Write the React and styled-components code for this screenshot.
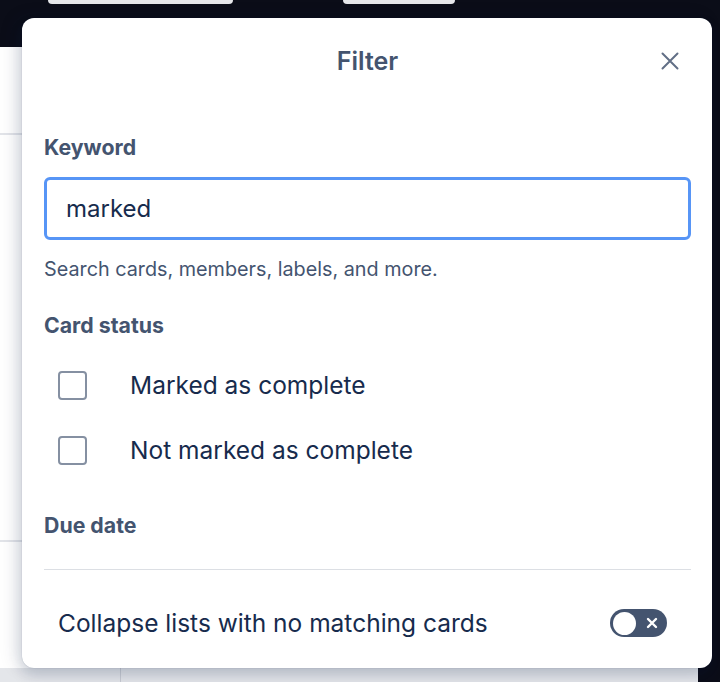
import styled, { createGlobalStyle } from "styled-components";

const GlobalStyle = createGlobalStyle`
  html, body {
    margin: 0;
    padding: 0;
    background: #0b0d18;
    font-family: Inter, "Noto Sans", "Liberation Sans", sans-serif;
  }
`;

function Checkbox() {
  return <Box type="button" aria-label="checkbox" />;
}

function Toggle() {
  return (
    <Switch type="button">
      <Knob />
      <svg width="12" height="12" viewBox="0 0 12 12">
        <path
          d="M2 2 L10 10 M10 2 L2 10"
          stroke="#fff"
          strokeWidth="2.4"
          strokeLinecap="round"
        />
      </svg>
    </Switch>
  );
}

function App() {
  return (
    <>
      <GlobalStyle />
      <Page>
        <TopBar>
          <Tab $width={185} />
          <Tab $width={112} />
        </TopBar>
        <Board>
          <Sheet>
            <SheetLine $top={86} />
            <SheetLine $top={493} />
            <SheetFooter />
          </Sheet>
        </Board>

        <Popover>
          <Header>
            <Title>Filter</Title>
            <Close type="button" aria-label="Close">
              <svg width="18" height="18" viewBox="0 0 18 18">
                <path
                  d="M1.5 1.5 L16.5 16.5 M16.5 1.5 L1.5 16.5"
                  stroke="#626f86"
                  strokeWidth="2"
                  strokeLinecap="round"
                />
              </svg>
            </Close>
          </Header>

          <Label>Keyword</Label>
          <Input defaultValue="marked" />
          <Hint>Search cards, members, labels, and more.</Hint>

          <Label $top={32}>Card status</Label>
          <Options>
            <Option>
              <Checkbox />
              <OptionText>Marked as complete</OptionText>
            </Option>
            <Option>
              <Checkbox />
              <OptionText>Not marked as complete</OptionText>
            </Option>
          </Options>

          <Label $top={37}>Due date</Label>
          <Divider />

          <CollapseRow>
            <OptionText>Collapse lists with no matching cards</OptionText>
            <Toggle />
          </CollapseRow>
        </Popover>
      </Page>
    </>
  );
}

const Page = styled.div`
  position: relative;
  width: 720px;
  height: 682px;
  overflow: hidden;
  background: #0b0d18;
  display: flex;
  flex-direction: column;
`;

const TopBar = styled.div`
  height: 47px;
  display: flex;
  align-items: flex-start;
  gap: 110px;
  padding-left: 48px;
  background: #0b0d18;
`;

const Tab = styled.div`
  width: ${(p) => p.$width}px;
  height: 4px;
  background: #e6e7ea;
  border-radius: 0 0 4px 4px;
`;

const Board = styled.div`
  flex: 1;
  display: flex;
`;

const Sheet = styled.div`
  position: relative;
  width: 698px;
  background: #ffffff;
  display: flex;
  flex-direction: column;
  justify-content: flex-end;
`;

const SheetLine = styled.div`
  position: absolute;
  left: 0;
  right: 0;
  top: ${(p) => p.$top}px;
  height: 2px;
  background: #e2e4e9;
`;

const SheetFooter = styled.div`
  height: 14px;
  background: #e4e6ea;
  border-left: 1px solid #c9ccd3;
  margin-left: 120px;
  box-shadow: -120px 0 0 #e4e6ea;
`;

const Popover = styled.section`
  position: absolute;
  left: 22px;
  top: 18px;
  width: 690px;
  height: 650px;
  box-sizing: border-box;
  padding: 0 21px 0 22px;
  background: #ffffff;
  border-radius: 12px;
  box-shadow: 0 8px 14px rgba(9, 30, 66, 0.15), 0 0 1px rgba(9, 30, 66, 0.31),
    -6px 0 18px rgba(9, 30, 66, 0.12);
  display: flex;
  flex-direction: column;
`;

const Header = styled.header`
  position: relative;
  height: 86px;
  display: flex;
  align-items: center;
  justify-content: center;
`;

const Title = styled.h2`
  margin: 0;
  font-size: 25px;
  line-height: 30px;
  font-weight: 600;
  color: #44546f;
`;

const Close = styled.button`
  position: absolute;
  right: 1px;
  top: 23px;
  width: 40px;
  height: 40px;
  border: none;
  background: transparent;
  display: flex;
  align-items: center;
  justify-content: center;
  padding: 0;
`;

const Label = styled.div`
  margin-top: ${(p) => p.$top || 31}px;
  font-size: 21.3px;
  line-height: 24px;
  font-weight: 700;
  color: #44546f;
`;

const Input = styled.input`
  margin-top: 18px;
  height: 63px;
  box-sizing: border-box;
  width: 100%;
  border: 3px solid #5795f6;
  border-radius: 6px;
  padding: 0 19px;
  font-family: inherit;
  font-size: 24px;
  color: #172b4d;
  outline: none;
`;

const Hint = styled.div`
  margin-top: 17px;
  font-size: 19.8px;
  line-height: 24px;
  color: #44546f;
`;

const Options = styled.div`
  margin-top: 22px;
  display: flex;
  flex-direction: column;
  gap: 13px;
`;

const Option = styled.label`
  height: 52px;
  display: flex;
  align-items: center;
  gap: 43px;
  padding-left: 14px;
`;

const Box = styled.button`
  width: 29px;
  height: 29px;
  box-sizing: border-box;
  border: 2px solid #8590a2;
  border-radius: 4px;
  background: #fff;
  padding: 0;
`;

const OptionText = styled.span`
  font-size: 24.5px;
  line-height: 30px;
  color: #172b4d;
`;

const Divider = styled.hr`
  margin: 32px 0 0;
  border: none;
  height: 1px;
  background: #dcdfe4;
`;

const CollapseRow = styled.div`
  margin-top: 25px;
  height: 56px;
  display: flex;
  align-items: center;
  justify-content: space-between;
  padding: 0 24px 0 14px;
`;

const Switch = styled.button`
  width: 57px;
  height: 28px;
  border: none;
  border-radius: 14px;
  background: #44546f;
  padding: 0 9px 0 3px;
  display: flex;
  align-items: center;
  justify-content: space-between;
`;

const Knob = styled.span`
  width: 23px;
  height: 23px;
  border-radius: 50%;
  background: #fff;
`;

export default App;
